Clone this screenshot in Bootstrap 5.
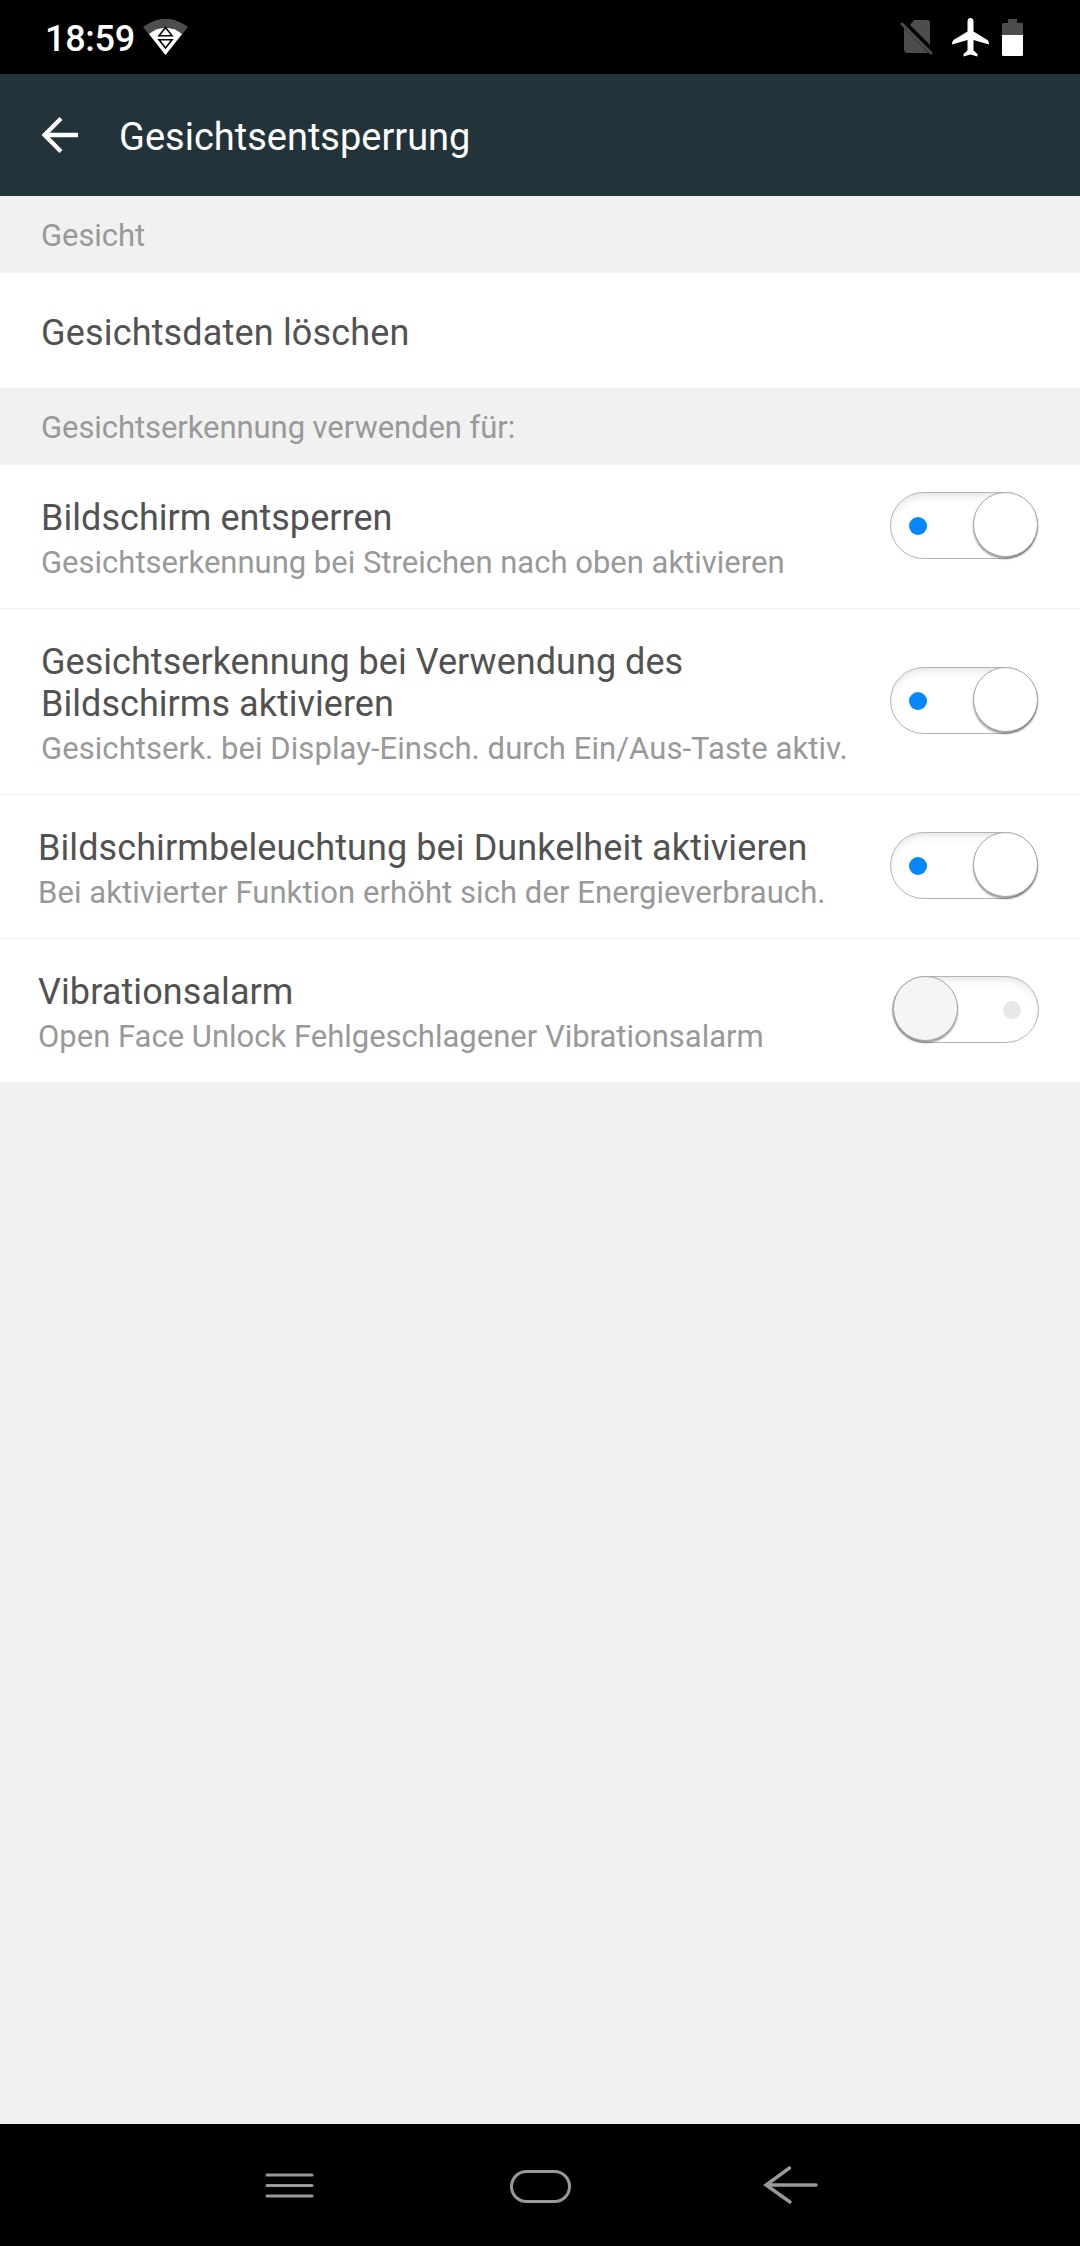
<!DOCTYPE html>
<html lang="de">
<head>
<meta charset="utf-8">
<meta name="viewport" content="width=device-width, initial-scale=1">
<title>Gesichtsentsperrung</title>
<link href="https://cdn.jsdelivr.net/npm/bootstrap@5.3.0/dist/css/bootstrap.min.css" rel="stylesheet">
<style>
body { font-family: Roboto, "Noto Sans", sans-serif; background: #f1f1f1; height: 2246px; color: #525252; line-height: 1.17; overflow: hidden; }
svg { display: block; flex: none; }
.status { height: 74px; padding: 0 57px 0 45px; }
.clock { font-size: 36px; font-weight: 500; line-height: 42px; padding-top: 3px; letter-spacing: -.3px; }
.plane { margin-left: 19px; }
.battery { margin-left: 13px; }
.topbar { height: 122px; background: #23333a; padding-left: 42px; }
.topbar h1 { font-size: 38px; font-weight: 400; line-height: 42px; margin: 3px 0 0 41px; color: #fff; }
.section { height: 77px; padding: 21px 41px 0; font-size: 31px; line-height: 37px; color: #999; letter-spacing: -.07px; }
.setting { padding: 32px 42px 27px 41px; border: 0; border-bottom: 1px solid #eee; border-radius: 0; background: #fff; }
.setting:last-child { border-bottom: 0; }
.setting.inset { padding-left: 38px; }
.setting.single { height: 115px; padding-top: 39px; letter-spacing: .17px; }
.name { font-size: 36px; line-height: 42px; color: #525252; letter-spacing: .04px; }
.single .name { letter-spacing: .17px; }
.inset .name { letter-spacing: .09px; }
.hint { font-size: 31px; line-height: 37px; color: #999; margin-top: 5px; white-space: nowrap; }
.hint.wide { letter-spacing: .07px; }
.toggle { width: 148px; height: 67px; border: 1px solid #b4b4b4; border-radius: 34px; flex: none; box-shadow: inset 0 5px 9px -3px rgba(0,0,0,.13); margin-top: -8px; }
.toggle.high { margin-top: -28px; }
.dot { width: 18px; height: 18px; border-radius: 50%; background: #0487ff; margin: 2px 0 0 18px; }
.knob { width: 65px; height: 65px; border-radius: 50%; background: #fff; border: 1px solid #a8a8a8; box-shadow: 0 2px 2px rgba(0,0,0,.4); margin: -2px -1px 0 0; }
.toggle.off { margin-right: -1px; width: 147px; }
.off .dot { background: #e8e8e8; margin: 2px 17px 0 0; }
.off .knob { background: #f5f5f5; margin: -2px 0 0 0; }
.navkeys { height: 122px; }
</style>
</head>
<body class="d-flex flex-column">
<header>
  <div class="status bg-black text-white d-flex align-items-center">
    <span class="clock">18:59</span>
    <svg class="ms-2" width="45" height="36" viewBox="0 0 45 36"><path d="M0 8Q22.500-8.600 45 8L22.500 36Z" fill="#4d4d4d"/><path d="M6 15Q22.500 2.500 39 15L22.500 36Z" fill="#fff"/><path d="M22.500 8.500L29 16.800H16ZM16 20.800H29L22.500 29Z" fill="#fff" stroke="#000" stroke-width="1.600"/></svg>
    <svg class="ms-auto" width="33" height="37" viewBox="0 0 33 37"><path d="M14 1H27Q30 1 30 4V26L10 6ZM4 9L28 33.500Q27 34 26 34H8Q4 34 4 30Z" fill="#4d4d4d"/><path d="M2 5L31 34" stroke="#4d4d4d" stroke-width="3" stroke-linecap="round"/></svg>
    <svg class="plane" width="37" height="39" viewBox="0 0 37 39"><path d="M18.500 0Q21.500 0 21.500 4V13.500L35.500 22Q37 23 37 26.500L21.500 22V32.500L25.500 36V38.500L18.500 36.500L11.500 38.500V36L15.500 32.500V22L0 26.500Q0 23 1.500 22L15.500 13.500V4Q15.500 0 18.500 0Z" fill="#fff"/></svg>
    <svg class="battery" width="21" height="37" viewBox="0 0 21 37"><path d="M6 0H15V4H20Q21 4 21 5V17H0V5Q0 4 1 4H6Z" fill="#4d4d4d"/><path d="M0 16H21V35.500Q21 37 19.500 37H1.500Q0 37 0 35.500Z" fill="#fff"/></svg>
  </div>
  <div class="topbar d-flex align-items-center">
    <svg width="36" height="36" viewBox="0 0 36 36"><path d="M36 18H3M19 1.500L2.500 18L19 34.500" fill="none" stroke="#fff" stroke-width="4.300"/></svg>
    <h1>Gesichtsentsperrung</h1>
  </div>
</header>
<main class="flex-grow-1">
  <div class="section">Gesicht</div>
  <div class="list-group list-group-flush">
    <div class="list-group-item setting single"><div class="name">Gesichtsdaten löschen</div></div>
  </div>
  <div class="section">Gesichtserkennung verwenden für:</div>
  <div class="list-group list-group-flush">
    <div class="list-group-item setting d-flex align-items-center justify-content-between">
      <div><div class="name">Bildschirm entsperren</div><div class="hint">Gesichtserkennung bei Streichen nach oben aktivieren</div></div>
      <div class="toggle high d-flex align-items-center justify-content-between" role="switch" aria-checked="true"><span class="dot"></span><span class="knob"></span></div>
    </div>
    <div class="list-group-item setting d-flex align-items-center justify-content-between">
      <div><div class="name">Gesichtserkennung bei Verwendung des<br>Bildschirms aktivieren</div><div class="hint wide">Gesichtserk. bei Display-Einsch. durch Ein/Aus-Taste aktiv.</div></div>
      <div class="toggle d-flex align-items-center justify-content-between" role="switch" aria-checked="true"><span class="dot"></span><span class="knob"></span></div>
    </div>
    <div class="list-group-item setting inset d-flex align-items-center justify-content-between">
      <div><div class="name">Bildschirmbeleuchtung bei Dunkelheit aktivieren</div><div class="hint wide">Bei aktivierter Funktion erhöht sich der Energieverbrauch.</div></div>
      <div class="toggle d-flex align-items-center justify-content-between" role="switch" aria-checked="true"><span class="dot"></span><span class="knob"></span></div>
    </div>
    <div class="list-group-item setting inset d-flex align-items-center justify-content-between">
      <div><div class="name">Vibrationsalarm</div><div class="hint">Open Face Unlock Fehlgeschlagener Vibrationsalarm</div></div>
      <div class="toggle off d-flex align-items-center justify-content-between" role="switch" aria-checked="false"><span class="knob"></span><span class="dot"></span></div>
    </div>
  </div>
</main>
<footer class="navkeys bg-black d-flex justify-content-center align-items-center">
  <svg width="580" height="40" viewBox="0 0 580 40" fill="none" stroke="#999" stroke-width="3" stroke-linecap="round"><path d="M17 10H62M17 20.500H62M17 31H62"/><rect x="261.500" y="6.500" width="58" height="30" rx="15"/><path d="M566 20H516M539.500 3L516 20L540 37" stroke-width="3.400"/></svg>
</footer>
<script src="https://cdn.jsdelivr.net/npm/bootstrap@5.3.0/dist/js/bootstrap.bundle.min.js"></script>
</body>
</html>
